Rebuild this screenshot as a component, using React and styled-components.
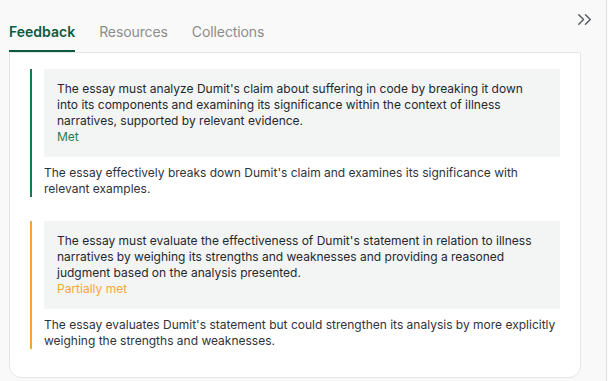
import styled, { createGlobalStyle } from "styled-components"
import { ChevronsRight } from "lucide-react"

const GlobalStyle = createGlobalStyle`
    html, body {
        margin: 0;
        padding: 0;
        background: #f9f9f9;
        font-family: Inter, "Noto Sans", "Liberation Sans", sans-serif;
        -webkit-font-smoothing: antialiased;
    }
`

const items = [
    {
        status: "met",
        criterion: "The essay must analyze Dumit's claim about suffering in code by breaking it down into its components and examining its significance within the context of illness narratives, supported by relevant evidence.",
        label: "Met",
        comment: "The essay effectively breaks down Dumit's claim and examines its significance with relevant examples.",
    },
    {
        status: "partial",
        criterion: "The essay must evaluate the effectiveness of Dumit's statement in relation to illness narratives by weighing its strengths and weaknesses and providing a reasoned judgment based on the analysis presented.",
        label: "Partially met",
        comment: "The essay evaluates Dumit's statement but could strengthen its analysis by more explicitly weighing the strengths and weaknesses.",
    },
]

const tabs = ["Feedback", "Resources", "Collections"]

const App = () => {
    return (
        <>
            <GlobalStyle />
            <Panel>
                <Header>
                    <Tabs>
                        {tabs.map((t, i) => (
                            <Tab key={t} $active={i === 0}>{t}</Tab>
                        ))}
                    </Tabs>
                    <CollapseButton aria-label="collapse">
                        <ChevronsRight size={23} strokeWidth={1.5} />
                    </CollapseButton>
                </Header>
                <Card>
                    {items.map((item) => (
                        <Item key={item.label} $status={item.status}>
                            <Criterion>
                                {item.criterion}
                                <Status $status={item.status}>{item.label}</Status>
                            </Criterion>
                            <Comment>{item.comment}</Comment>
                        </Item>
                    ))}
                </Card>
            </Panel>
        </>
    )
}

export default App

const statusColors = {
    met: { bar: "#137a54", text: "#1d7d58" },
    partial: { bar: "#f4a62e", text: "#f5a83a" },
}

const Panel = styled.div`
    width: 606px;
    height: 381px;
    border-right: 1px solid #e4e4e4;
    display: flex;
    flex-direction: column;
`

const Header = styled.div`
    height: 52px;
    display: flex;
    justify-content: space-between;
    align-items: flex-start;
    padding: 0 10px 0 9px;
`

const Tabs = styled.div`
    align-self: flex-end;
    display: flex;
    gap: 24px;
`

const Tab = styled.div`
    font-size: 14px;
    line-height: 20px;
    padding: 0 0 8px;
    letter-spacing: ${(p) => (p.$active ? "0" : "-0.1px")};
    font-weight: ${(p) => (p.$active ? 600 : 400)};
    color: ${(p) => (p.$active ? "#0c5a40" : "#8c8c8c")};
    border-bottom: 2px solid ${(p) => (p.$active ? "#0c5a40" : "transparent")};
    cursor: pointer;
`

const CollapseButton = styled.div`
    margin-top: 8px;
    color: #555a60;
    display: flex;
    cursor: pointer;
`

const Card = styled.div`
    margin: 0 25px 0 9px;
    background: #fff;
    border: 1px solid #e6e6e6;
    border-radius: 0 0 12px 12px;
    padding: 16px 20px 28px;
    display: flex;
    flex-direction: column;
    gap: 24px;
`

const Item = styled.div`
    border-left: 2px solid ${(p) => statusColors[p.$status].bar};
    padding-left: 12px;
`

const Criterion = styled.div`
    background: #f3f4f4;
    padding: 12px 18px 12px 13px;
    font-size: 12px;
    line-height: 16px;
    color: #24282e;
`

const Status = styled.div`
    color: ${(p) => statusColors[p.$status].text};
`

const Comment = styled.div`
    margin-top: 8px;
    font-size: 12px;
    line-height: 16px;
    color: #2f333a;
`
